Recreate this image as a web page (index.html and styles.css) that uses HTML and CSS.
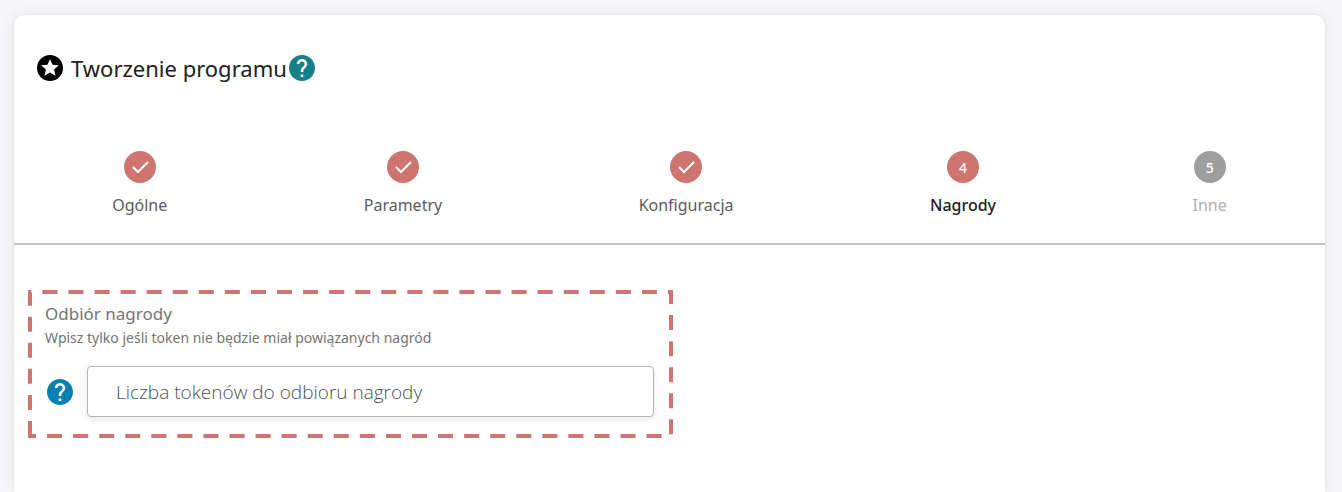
FILE: index.html
```html
<!DOCTYPE html>
<html lang="pl">
<head>
    <meta charset="UTF-8">
    <meta name="viewport" content="width=device-width, initial-scale=1">
    <title>Tworzenie programu</title>
    <link rel="stylesheet" href="styles.css">
</head>
<body>
<main class="card">
    <header class="card-header">
        <svg class="icon" viewBox="2 2 20 20" aria-hidden="true">
            <circle cx="12" cy="12" r="10" fill="#000"/>
            <path fill="#fff" d="M16.23 18 12 15.45 7.77 18l1.12-4.81-3.73-3.23 4.92-.42L12 5l1.92 4.53 4.92.42-3.73 3.23z"/>
        </svg>
        <h1 class="title">Tworzenie programu</h1>
        <button type="button" class="help help-title" aria-label="Pomoc">
            <svg class="icon" viewBox="2 2 20 20" aria-hidden="true">
                <path fill="currentColor" d="M12 2C6.48 2 2 6.48 2 12s4.48 10 10 10 10-4.48 10-10S17.52 2 12 2zm1 17h-2v-2h2v2zm2.07-7.75-.9.92C13.45 12.9 13 13.5 13 15h-2v-.5c0-1.1.45-2.1 1.17-2.83l1.24-1.26c.37-.36.59-.86.59-1.41 0-1.1-.9-2-2-2s-2 .9-2 2H8c0-2.21 1.79-4 4-4s4 1.79 4 4c0 .88-.36 1.68-.93 2.25z"/>
            </svg>
        </button>
    </header>

    <ol class="stepper">
        <li class="step">
            <span class="step-icon">
                <svg class="check" viewBox="0 0 24 24" aria-hidden="true"><path d="M5 12l5 5L20 7"/></svg>
            </span>
            <span class="step-label">Ogólne</span>
        </li>
        <li class="step">
            <span class="step-icon">
                <svg class="check" viewBox="0 0 24 24" aria-hidden="true"><path d="M5 12l5 5L20 7"/></svg>
            </span>
            <span class="step-label">Parametry</span>
        </li>
        <li class="step">
            <span class="step-icon">
                <svg class="check" viewBox="0 0 24 24" aria-hidden="true"><path d="M5 12l5 5L20 7"/></svg>
            </span>
            <span class="step-label">Konfiguracja</span>
        </li>
        <li class="step step-active" aria-current="step">
            <span class="step-icon">4</span>
            <span class="step-label">Nagrody</span>
        </li>
        <li class="step step-disabled">
            <span class="step-icon">5</span>
            <span class="step-label">Inne</span>
        </li>
    </ol>

    <section class="content">
        <div class="reward">
            <!-- dashed frame, the dashes run clockwise from the bottom left corner -->
            <svg class="reward-frame" viewBox="0 0 645 148" preserveAspectRatio="none" aria-hidden="true">
                <path pathLength="1566" d="M2 146V2H643V146Z"/>
            </svg>
            <h2 class="reward-title">Odbiór nagrody</h2>
            <p class="reward-hint" id="reward-hint">Wpisz tylko jeśli token nie będzie miał powiązanych nagród</p>
            <div class="reward-row">
                <button type="button" class="help help-field" aria-label="Pomoc">
                    <svg class="icon" viewBox="2 2 20 20" aria-hidden="true">
                        <path fill="currentColor" d="M12 2C6.48 2 2 6.48 2 12s4.48 10 10 10 10-4.48 10-10S17.52 2 12 2zm1 17h-2v-2h2v2zm2.07-7.75-.9.92C13.45 12.9 13 13.5 13 15h-2v-.5c0-1.1.45-2.1 1.17-2.83l1.24-1.26c.37-.36.59-.86.59-1.41 0-1.1-.9-2-2-2s-2 .9-2 2H8c0-2.21 1.79-4 4-4s4 1.79 4 4c0 .88-.36 1.68-.93 2.25z"/>
                    </svg>
                </button>
                <input type="text" class="reward-input" inputmode="numeric" placeholder="Liczba tokenów do odbioru nagrody" aria-label="Liczba tokenów do odbioru nagrody" aria-describedby="reward-hint">
            </div>
        </div>
    </section>
</main>
</body>
</html>
```
FILE: styles.css
```css
* {
    box-sizing: border-box;
}

body {
    margin: 0;
    padding: 15px 17px 0 14px;
    background: #f7f7fa;
    color: #212121;
    font-family: "Noto Sans", "Open Sans", sans-serif;
}

.card {
    min-height: calc(100vh - 15px);
    background: #fff;
    border-radius: 10px 10px 0 0;
    box-shadow: 0 0 3px rgba(0, 0, 0, 0.08), 0 0 16px rgba(0, 0, 0, 0.07);
}

.card-header {
    display: flex;
    align-items: center;
    padding: 38px 23px 0;
}

.icon {
    display: block;
    width: 26px;
    height: 26px;
}

.title {
    margin: 0 2px 0 8px;
    font-size: 22px;
    font-weight: 400;
    line-height: 30px;
}

.help {
    padding: 0;
    border: none;
    background: none;
    cursor: pointer;
}

.help-title {
    color: #158087;
}

.help-field {
    color: #0781b4;
}

/* stepper */
.stepper {
    display: flex;
    justify-content: space-around;
    margin: 0;
    padding: 68px 0 26px;
    border-bottom: 2px solid #c2c2c2;
    list-style: none;
}

.step {
    display: flex;
    flex-direction: column;
    align-items: center;
    gap: 10px;
    color: #5c5c5c;
}

.step-icon {
    display: flex;
    align-items: center;
    justify-content: center;
    width: 32px;
    height: 32px;
    border-radius: 50%;
    background: #cf7570;
    color: #fff;
    font-size: 14px;
    font-weight: 500;
}

.check {
    width: 24px;
    height: 24px;
    fill: none;
    stroke: #fff;
    stroke-width: 2;
}

.step-label {
    font-size: 16px;
    line-height: 24px;
}

.step-active {
    color: #212121;
    font-weight: 500;
}

.step-disabled {
    color: #b0b0b0;
}

.step-disabled .step-icon {
    background: #9e9e9e;
}

/* reward */
.content {
    padding: 45px 14px 54px;
}

.reward {
    position: relative;
    max-width: 645px;
    padding: 12px 19px 21px 17px;
}

.reward-frame {
    position: absolute;
    top: 0;
    left: 0;
    width: 100%;
    height: 100%;
    pointer-events: none;
}

.reward-frame path {
    fill: none;
    stroke: #cf7570;
    stroke-width: 4;
    stroke-dasharray: 15 11;
}

.reward-title {
    margin: 0;
    color: #757575;
    font-size: 17px;
    font-weight: 400;
    line-height: 24px;
}

.reward-hint {
    margin: 0;
    color: #757575;
    font-size: 14px;
    line-height: 24px;
}

.reward-row {
    display: flex;
    align-items: center;
    gap: 14px;
    margin-top: 16px;
    padding-left: 2px;
}

.reward-input {
    flex: 1;
    min-width: 0;
    height: 51px;
    padding: 0 28px;
    border: 1px solid #b4b4be;
    border-radius: 4px;
    background: #fff;
    box-shadow: 0 2px 6px rgba(0, 0, 0, 0.1);
    color: #4f4f4f;
    font-family: "Open Sans", "Noto Sans", sans-serif;
    font-size: 19px;
    font-weight: 300;
}

.reward-input::placeholder {
    color: #4f4f4f;
    opacity: 1;
}
```
